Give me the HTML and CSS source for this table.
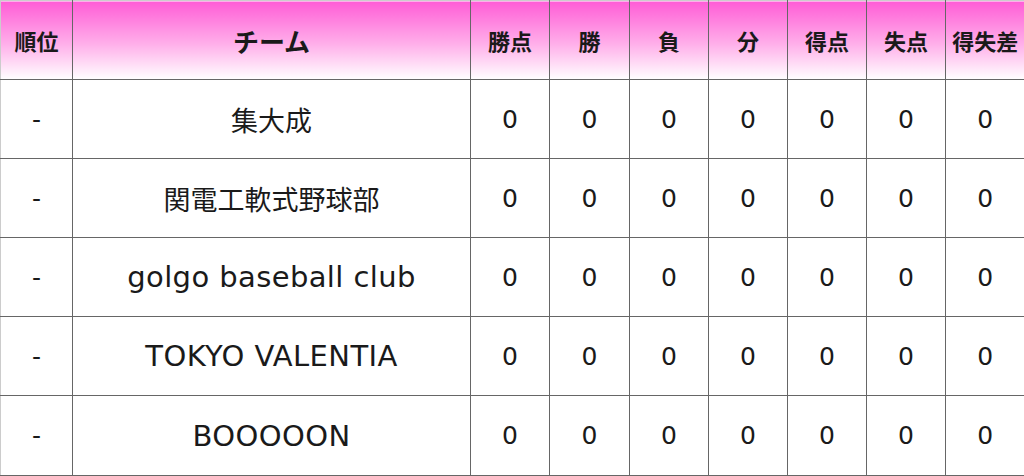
FILE: index.html
```html
<!DOCTYPE html>
<html lang="ja">
<head>
<meta charset="utf-8">
<link rel="stylesheet" href="styles.css">
</head>
<body>
<table class="standings">
  <colgroup>
    <col class="c-rank"><col class="c-team"><col class="c-num"><col class="c-num2"><col class="c-num"><col class="c-num"><col class="c-num"><col class="c-num"><col class="c-num">
  </colgroup>
  <thead>
    <tr>
      <th>順位</th><th class="team-h">チーム</th><th>勝点</th><th>勝</th><th>負</th><th>分</th><th>得点</th><th>失点</th><th>得失差</th>
    </tr>
  </thead>
  <tbody>
    <tr><td>-</td><td class="team">集大成</td><td>0</td><td>0</td><td>0</td><td>0</td><td>0</td><td>0</td><td>0</td></tr>
    <tr><td>-</td><td class="team">関電工軟式野球部</td><td>0</td><td>0</td><td>0</td><td>0</td><td>0</td><td>0</td><td>0</td></tr>
    <tr><td>-</td><td class="team latin">golgo baseball club</td><td>0</td><td>0</td><td>0</td><td>0</td><td>0</td><td>0</td><td>0</td></tr>
    <tr><td>-</td><td class="team latin">TOKYO VALENTIA</td><td>0</td><td>0</td><td>0</td><td>0</td><td>0</td><td>0</td><td>0</td></tr>
    <tr class="last"><td>-</td><td class="team latin">BOOOOON</td><td>0</td><td>0</td><td>0</td><td>0</td><td>0</td><td>0</td><td>0</td></tr>
  </tbody>
</table>
</body>
</html>
```
FILE: styles.css
```css
html, body {
  margin: 0;
  padding: 0;
  background: #fff;
}
.standings {
  border-collapse: collapse;
  table-layout: fixed;
  width: 1024px;
  font-family: "DejaVu Sans", "Noto Sans CJK JP", sans-serif;
  color: #1a1a1a;
}
.c-rank { width: 72px; }
.c-team { width: 398px; }
.c-num { width: 79px; }
.c-num2 { width: 80px; }
.standings tr {
  height: 79px;
}
.standings tr.last {
  height: 80px;
}
.standings th,
.standings td {
  border: 1px solid #666;
  padding: 0;
  text-align: center;
  vertical-align: middle;
}
.standings th {
  font-family: "Noto Sans CJK JP", sans-serif;
  font-size: 22px;
  font-weight: bold;
  background: linear-gradient(to bottom, #ff5cd6 0%, #ffb0ea 55%, #ffffff 100%);
  border-top-color: #ccc;
}
.standings th.team-h {
  font-size: 26px;
}
.standings td {
  font-size: 25px;
  font-weight: normal;
}
.standings td.team {
  font-size: 27px;
}
.standings td.team.latin {
  font-size: 29px;
  letter-spacing: 0.4px;
}
.standings tr > :first-child {
  border-left-color: #ccc;
}
.standings tr > :last-child {
  border-right: none;
}
```
